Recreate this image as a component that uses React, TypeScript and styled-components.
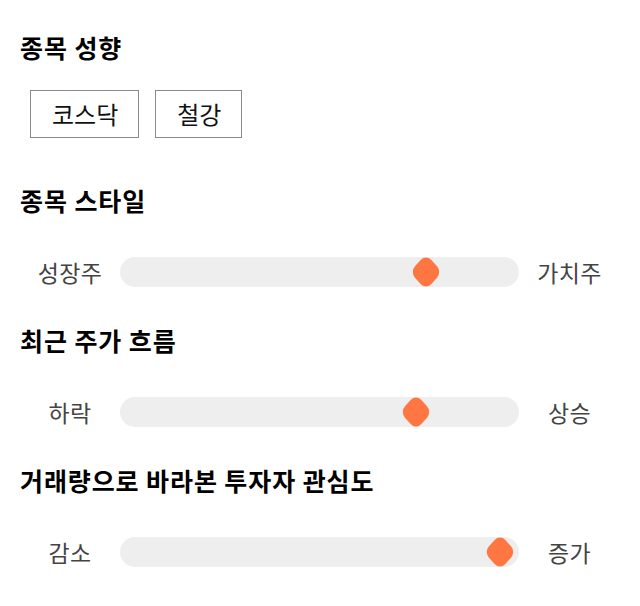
import React from "react";
import styled, { createGlobalStyle } from "styled-components";

const Global = createGlobalStyle`
  body {
    margin: 0;
    background: #ffffff;
    font-family: "Noto Sans CJK KR", "Noto Sans", sans-serif;
  }
`;

const Page = styled.div`
  padding: 30px 20px 0 20px;
  display: flex;
  flex-direction: column;
`;

const Section = styled.section`
  display: flex;
  flex-direction: column;
`;

const Heading = styled.h2`
  margin: 0;
  font-size: 25px;
  font-weight: 700;
  line-height: 34px;
  color: #000;
  letter-spacing: 0.9px;
`;

const ChipRow = styled.div`
  display: flex;
  gap: 16px;
  padding: 26px 0 0 10px;
  margin-bottom: 45px;
`;

const Chip = styled.button`
  font-family: inherit;
  font-size: 24px;
  line-height: 1;
  color: #111;
  background: #fff;
  border: 1px solid #8a8a8a;
  border-radius: 0;
  padding: 0 20px 0 21px;
  height: 48px;
`;

const SliderRow = styled.div`
  display: grid;
  grid-template-columns: 100px 399px 101px;
  align-items: center;
  margin-top: 38px;
  margin-bottom: 38px;
  height: 30px;
`;

const Label = styled.span`
  text-align: center;
  font-size: 23px;
  color: #444;
  letter-spacing: 0.3px;
`;

const Track = styled.div`
  position: relative;
  height: 30px;
  background: #eeeeee;
  border-radius: 15px;
`;

const Thumb = styled.div`
  position: absolute;
  top: 4px;
  width: 22px;
  height: 22px;
  margin-left: -11px;
  background: #ff7642;
  border-radius: 7px;
  transform: scale(1.04, 1.15) rotate(45deg);
`;

type SliderProps = { left: string; right: string; pos: number };

const Slider = ({ left, right, pos }: SliderProps) => (
  <SliderRow>
    <Label>{left}</Label>
    <Track>
      <Thumb style={{ left: `${pos}px` }} />
    </Track>
    <Label>{right}</Label>
  </SliderRow>
);

export default function App() {
  return (
    <Page>
      <Global />
      <Section>
        <Heading>종목 성향</Heading>
        <ChipRow>
          <Chip>코스닥</Chip>
          <Chip>철강</Chip>
        </ChipRow>
      </Section>
      <Section>
        <Heading>종목 스타일</Heading>
        <Slider left="성장주" right="가치주" pos={306} />
      </Section>
      <Section>
        <Heading>최근 주가 흐름</Heading>
        <Slider left="하락" right="상승" pos={296} />
      </Section>
      <Section>
        <Heading>거래량으로 바라본 투자자 관심도</Heading>
        <Slider left="감소" right="증가" pos={380} />
      </Section>
    </Page>
  );
}
